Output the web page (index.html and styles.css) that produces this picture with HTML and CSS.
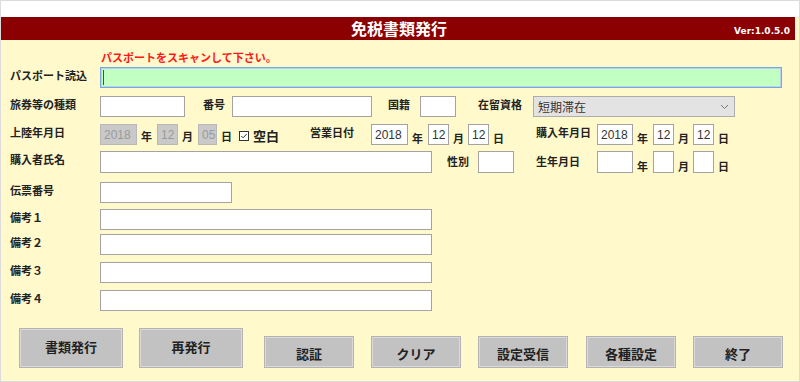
FILE: index.html
```html
<!DOCTYPE html>
<html lang="ja">
<head>
    <meta charset="UTF-8">
    <meta name="viewport" content="width=device-width, initial-scale=1.0">
    <title>免税書類発行</title>
    <link rel="stylesheet" href="styles.css">
</head>
<body>
    <div class="window">
        <div class="topstrip"></div>
        <div class="titlebar">
            <span></span>
            <h1 class="title">免税書類発行</h1>
            <span class="version">Ver:1.0.5.0</span>
        </div>

        <div class="form">
            <p class="notice">パスポートをスキャンして下さい。</p>

            <!-- パスポート -->
            <div class="row row-passport">
                <label class="lbl">パスポート読込</label>
                <input class="field field-scan" type="text">
            </div>

            <!-- 旅券 -->
            <div class="row row-2">
                <label class="lbl">旅券等の種類</label>
                <input class="field w-85" type="text">
                <label class="lbl lbl-inline ml-18 w-29">番号</label>
                <input class="field w-140" type="text">
                <label class="lbl lbl-inline ml-16 w-32">国籍</label>
                <input class="field w-36" type="text">
                <label class="lbl lbl-inline ml-22 w-55">在留資格</label>
                <div class="select">
                    <span>短期滞在</span>
                    <svg width="9" height="6" viewBox="0 0 9 6"><path d="M1 1l3.5 3.5L8 1" fill="none" stroke="#777" stroke-width="1"/></svg>
                </div>
            </div>

            <!-- 日付 -->
            <div class="row row-3">
                <label class="lbl">上陸年月日</label>
                <input class="field field-off w-37" type="text" value="2018" disabled>
                <span class="unit unit-mid">年</span>
                <input class="field field-off w-21" type="text" value="12" disabled>
                <span class="unit unit-mid">月</span>
                <input class="field field-off w-19" type="text" value="05" disabled>
                <span class="unit unit-mid unit-last">日</span>
                <span class="check">
                    <svg width="10" height="10" viewBox="0 0 10 10"><rect x="0.5" y="0.5" width="9" height="9" fill="#fff" stroke="#333"/><path d="M2.3 5l1.8 1.8L7.6 3.1" fill="none" stroke="#333" stroke-width="1"/></svg>
                    空白
                </span>
                <label class="lbl lbl-inline w-61">営業日付</label>
                <input class="field w-37" type="text" value="2018">
                <span class="unit">年</span>
                <input class="field w-21" type="text" value="12">
                <span class="unit unit-tight">月</span>
                <input class="field w-21" type="text" value="12">
                <span class="unit unit-last">日</span>
                <label class="lbl lbl-inline ml-31 w-61">購入年月日</label>
                <input class="field w-36" type="text" value="2018">
                <span class="unit">年</span>
                <input class="field w-21" type="text" value="12">
                <span class="unit unit-tight">月</span>
                <input class="field w-21" type="text" value="12">
                <span class="unit unit-last">日</span>
            </div>

            <!-- 購入者 -->
            <div class="row row-4">
                <label class="lbl">購入者氏名</label>
                <input class="field w-332" type="text">
                <label class="lbl lbl-inline lbl-low ml-15 w-31">性別</label>
                <input class="field w-36" type="text">
                <label class="lbl lbl-inline lbl-low ml-22 w-61">生年月日</label>
                <input class="field w-36" type="text">
                <span class="unit">年</span>
                <input class="field w-21" type="text">
                <span class="unit unit-tight">月</span>
                <input class="field w-21" type="text">
                <span class="unit unit-last">日</span>
            </div>

            <div class="row row-5">
                <label class="lbl">伝票番号</label>
                <input class="field w-132" type="text">
            </div>
            <div class="row row-b1">
                <label class="lbl">備考１</label>
                <input class="field w-332" type="text">
            </div>
            <div class="row row-b2">
                <label class="lbl">備考２</label>
                <input class="field w-332" type="text">
            </div>
            <div class="row row-b3">
                <label class="lbl">備考３</label>
                <input class="field w-332" type="text">
            </div>
            <div class="row row-b4">
                <label class="lbl">備考４</label>
                <input class="field w-332" type="text">
            </div>

            <!-- ボタン -->
            <div class="buttons">
                <button class="btn btn-big">書類発行</button>
                <button class="btn btn-big">再発行</button>
                <button class="btn btn-gap">認証</button>
                <button class="btn">クリア</button>
                <button class="btn">設定受信</button>
                <button class="btn btn-wide">各種設定</button>
                <button class="btn">終了</button>
            </div>
        </div>
    </div>
</body>
</html>
```

FILE: styles.css
```css
* {
    margin: 0;
    padding: 0;
    box-sizing: border-box;
    font-family: "Noto Sans CJK JP", "Noto Sans", sans-serif;
}

body {
    background-color: #ffffff;
}

.window {
    width: 800px;
    height: 382px;
    border: 1px solid #dcdcdc;
    background-color: #fff9cc;
    overflow: hidden;
}

.topstrip {
    height: 16px;
    background-color: #ffffff;
}

.titlebar {
    height: 23px;
    margin-right: 4px;
    background-color: #8b0000;
    display: grid;
    grid-template-columns: 1fr auto 1fr;
    align-items: center;
    color: #ffffff;
}

.title {
    font-size: 16px;
    font-weight: 700;
    line-height: 23px;
    padding-left: 2px;
}

.version {
    justify-self: end;
    padding-right: 5px;
    padding-top: 4px;
    font-family: "DejaVu Sans", sans-serif;
    font-size: 9px;
    font-weight: 700;
}

.form {
    padding-left: 9px;
    display: flex;
    flex-direction: column;
}

.notice {
    margin-top: 10px;
    margin-left: 91px;
    font-size: 11px;
    line-height: 14px;
    font-weight: 700;
    color: #ff1616;
}

/* строки формы */
.row {
    display: flex;
    align-items: center;
    height: 21px;
}

.row-passport { margin-top: 3px; }
.row-2 { margin-top: 8px; }
.row-3 { margin-top: 7px; }
.row-4 { margin-top: 6px; height: 22px; }
.row-5 { margin-top: 9px; }
.row-b1 { margin-top: 6px; }
.row-b2 { margin-top: 4px; }
.row-b3 { margin-top: 7px; }
.row-b4 { margin-top: 7px; }

.lbl {
    flex: none;
    width: 90px;
    align-self: flex-start;
    font-size: 11px;
    line-height: 17px;
    font-weight: 700;
    color: #222222;
}

.lbl-low {
    line-height: 20px;
}

.field {
    flex: none;
    height: 100%;
    border: 1px solid #a3a3a3;
    background-color: #ffffff;
    padding: 0 0 0 3px;
    font-family: "Liberation Sans", sans-serif;
    font-size: 12px;
    color: #333333;
    outline: none;
}

.field-off {
    background-color: #c9c9c9;
    border-color: #b8b8b8;
    color: #9a9a9a;
}

/* зелёное поле сканера с курсором */
.field-scan {
    width: 682px;
    background: linear-gradient(#4a4a5a, #4a4a5a) no-repeat 2px 2px / 1px 15px, #c2ffc2;
    border-color: #7aa6da;
    box-shadow: inset 0 0 0 1px #b5d2ef;
}

.unit {
    flex: none;
    width: 16px;
    margin-left: 4px;
    align-self: flex-end;
    font-size: 11px;
    line-height: 14px;
    font-weight: 700;
    color: #222222;
}

.unit-mid {
    align-self: center;
    padding-top: 3px;
}

.unit-tight {
    width: 15px;
}

.unit-last {
    width: 12px;
}

.check {
    flex: none;
    width: 71px;
    display: flex;
    align-items: center;
    gap: 4px;
    margin-left: 6px;
    padding-top: 2px;
    font-size: 13px;
    font-weight: 700;
    color: #222222;
}

.select {
    flex: none;
    width: 202px;
    height: 21px;
    border: 1px solid #adadad;
    background-color: #e3e3e3;
    display: flex;
    align-items: center;
    justify-content: space-between;
    padding: 0 5px 0 4px;
    font-size: 12px;
    color: #333333;
}

.w-19 { width: 19px; }
.w-21 { width: 21px; }
.w-29 { width: 29px; }
.w-31 { width: 31px; }
.w-32 { width: 32px; }
.w-36 { width: 36px; }
.w-37 { width: 37px; }
.w-55 { width: 55px; }
.w-61 { width: 61px; }
.w-85 { width: 85px; }
.w-132 { width: 132px; }
.w-140 { width: 140px; }
.w-332 { width: 332px; }

.ml-15 { margin-left: 15px; }
.ml-16 { margin-left: 16px; }
.ml-18 { margin-left: 18px; }
.ml-22 { margin-left: 22px; }
.ml-31 { margin-left: 31px; }

/* кнопки */
.buttons {
    display: flex;
    align-items: flex-end;
    gap: 17px;
    margin-top: 17px;
    margin-left: 9px;
    height: 40px;
}

.btn {
    flex: none;
    width: 90px;
    height: 32px;
    background-color: #c2c2c2;
    border: 1px solid #b3b3b3;
    box-shadow: inset 0 0 0 1px #dadada;
    font-size: 13px;
    font-weight: 700;
    color: #222222;
    padding-top: 2px;
}

.btn-big {
    width: 104px;
    height: 40px;
    padding-top: 0;
    padding-bottom: 4px;
}

.btn-big + .btn-big {
    margin-left: -1px;
}

.btn-gap {
    margin-left: 4px;
}

.btn-wide {
    margin-left: 1px;
}
```
